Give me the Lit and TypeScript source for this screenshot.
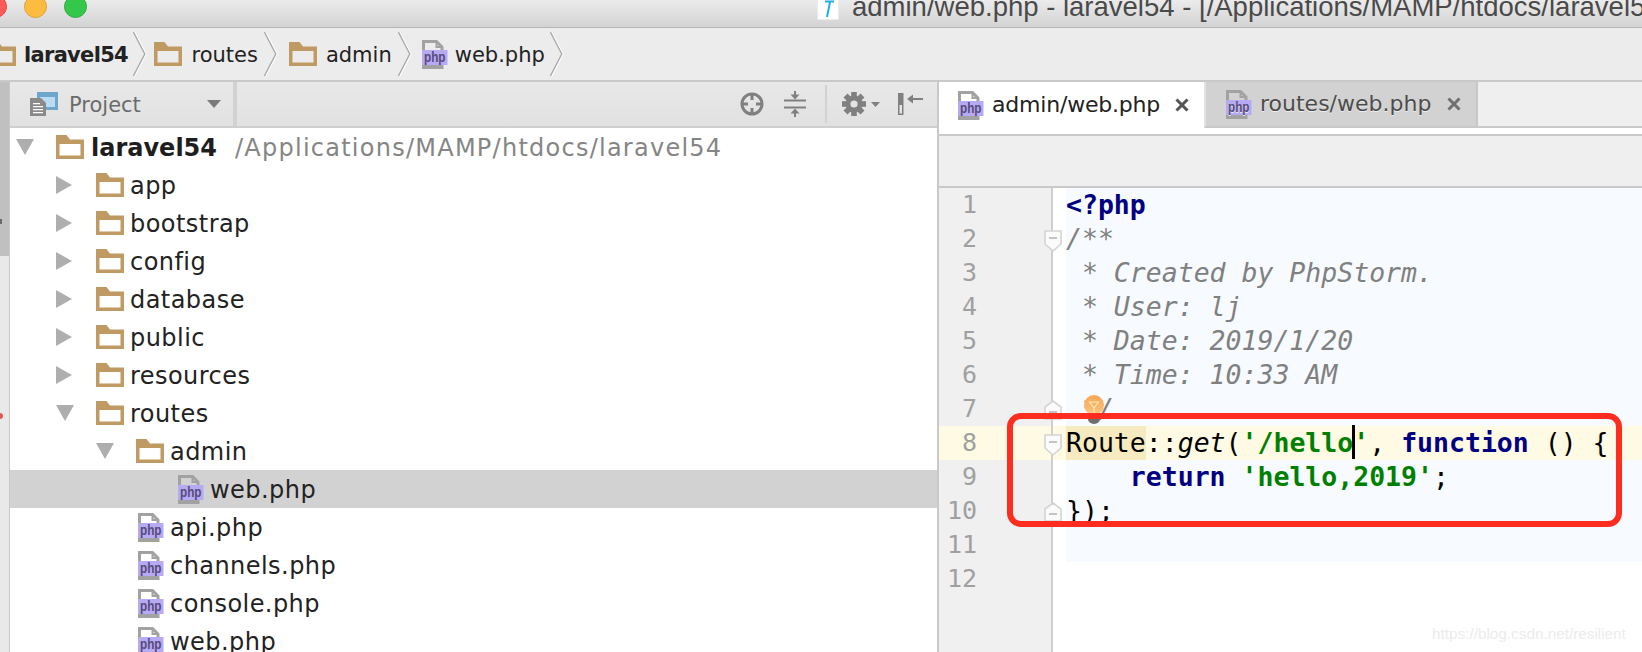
import { LitElement, html, css, svg } from "lit";
import { customElement } from "lit/decorators.js";

const folder = () => html`<svg class="folder" width="28" height="24" viewBox="0 0 28 24"><path fill="#c09a63" fill-rule="evenodd" d="M0 0h10.5l3.5 4.5H28V24H0zM3.5 9v11.5h21V9z"/></svg>`;
const phpIcon = () => html`<svg class="php" width="26" height="29" viewBox="0 0 26 29">
  <path fill="none" stroke="#a2a2a2" stroke-width="3" d="M1.5 11V1.5H14.5l5.5 5.5V11"/>
  <path fill="#a2a2a2" d="M13.5 1h2v5h5v2h-7z"/>
  <rect x="0" y="25" width="21.5" height="4" fill="#a2a2a2"/>
  <rect x="0" y="10" width="25.5" height="15" fill="#b8aaf2"/>
  <text x="2" y="21.5" textLength="21.5" lengthAdjust="spacingAndGlyphs" font-family="Liberation Sans" font-weight="700" font-size="15" fill="#544b7c">php</text>
</svg>`;
const chevron = () => html`<svg class="chev" width="14" height="46" viewBox="0 0 14 46"><polyline points="1.6,1 13,23 1.6,45" fill="none" stroke="#fff" stroke-width="1.4"/><polyline points="0.4,1 11.8,23 0.4,45" fill="none" stroke="#a9a9a9" stroke-width="1.4"/></svg>`;
const triOpen = () => html`<svg width="18" height="16" viewBox="0 0 18 16"><path fill="#aeaeae" d="M0 0h18L9 16z"/></svg>`;
const triClosed = () => html`<svg width="16" height="18" viewBox="0 0 16 18"><path fill="#aeaeae" d="M0 0l16 9L0 18z"/></svg>`;

const projectIcon = svg`<svg width="28" height="24" viewBox="0 0 28 24">
  <rect x="7" y="0" width="21" height="18" fill="#6ea5cc"/><rect x="10" y="5" width="15" height="10" fill="#b9dcf2"/>
  <path fill="#8a8a8a" d="M0 6h11l5 5v13H0z"/><path fill="#fff" d="M3 11h7v1.2H3zM3 14h10v1.2H3zM3 17h10v1.2H3zM3 20h10v1.2H3z"/>
</svg>`;
const targetIcon = svg`<svg width="24" height="24" viewBox="0 0 24 24" fill="none" stroke="#808080" stroke-width="3"><circle cx="12" cy="12" r="10"/><path d="M12 2v6M12 16v6M2 12h6M16 12h6"/></svg>`;
const collapseIcon = svg`<svg width="22" height="26" viewBox="0 0 22 26"><path stroke="#808080" stroke-width="2" d="M0 9.5h22M0 16.5h22M11 0v6M11 20v6"/><path fill="#808080" d="M6.5 3.5h9L11 8.5zM6.5 22.5h9L11 17.5z"/></svg>`;
const gearIcon = svg`<svg width="24" height="24" viewBox="0 0 24 24"><g fill="#808080">
  ${[0, 45, 90, 135].map((a) => svg`<rect x="9.2" y="0" width="5.6" height="24" transform="rotate(${a} 12 12)"/>`)}
  <circle cx="12" cy="12" r="8.6"/></g><circle cx="12" cy="12" r="3.6" fill="#e4e4e4"/></svg>`;
const smallTri = svg`<svg width="9" height="5" viewBox="0 0 9 5"><path fill="#808080" d="M0 0h9L4.5 5z"/></svg>`;
const hideIcon = svg`<svg width="25" height="22" viewBox="0 0 25 22"><path fill="#808080" d="M0 0h5.5v22H0z"/><rect x="1.5" y="12" width="2.5" height="8.5" fill="#e4e4e4"/><path fill="#808080" d="M9 6l6-4.5v3.4h10v2.2H15v3.4z"/></svg>`;
const hammerPage = svg`<svg width="22" height="21" viewBox="0 0 22 21"><rect width="22" height="21" rx="1" fill="#fff" stroke="#d8d8d8"/><path fill="none" stroke="#22aef0" stroke-width="2" d="M8 2.5h9M13 3l-3 15"/></svg>`;
const foldDown = svg`<svg width="18" height="22" viewBox="0 0 18 22"><path fill="#fbfbfb" stroke="#d4d4d4" stroke-width="1.6" d="M1 1h16v13l-8 7-8-7z"/><path stroke="#b8b8b8" stroke-width="1.6" d="M5 8h8"/></svg>`;
const foldUp = svg`<svg width="18" height="20" viewBox="0 0 18 20"><path fill="#fbfbfb" stroke="#d4d4d4" stroke-width="1.6" d="M1 19V7l8-6 8 6v12z"/><path stroke="#b8b8b8" stroke-width="1.6" d="M5 12h8"/></svg>`;
const bulb = svg`<svg width="22" height="30" viewBox="0 0 22 30">
  <defs><linearGradient id="bg" x1="0" y1="0" x2="0" y2="1"><stop offset="0" stop-color="#f8a654"/><stop offset="1" stop-color="#fbc37e"/></linearGradient></defs>
  <circle cx="11" cy="10" r="10" fill="url(#bg)"/><path fill="#fbc37e" d="M5 16h12l-2 4H7z"/>
  <path fill="none" stroke="#fdeab8" stroke-width="1.2" d="M6.5 7h9L11 13zM11 13v6"/>
  <path fill="#6e6e6e" d="M5 19h12v5a6 5 0 0 1-12 0z"/></svg>`;

const tree = [
  { l: 0, k: "open", n: "laravel54", root: true },
  { l: 1, k: "closed", n: "app" },
  { l: 1, k: "closed", n: "bootstrap" },
  { l: 1, k: "closed", n: "config" },
  { l: 1, k: "closed", n: "database" },
  { l: 1, k: "closed", n: "public" },
  { l: 1, k: "closed", n: "resources" },
  { l: 1, k: "open", n: "routes" },
  { l: 2, k: "open", n: "admin" },
  { l: 3, k: "file", n: "web.php", sel: true },
  { l: 2, k: "file", n: "api.php" },
  { l: 2, k: "file", n: "channels.php" },
  { l: 2, k: "file", n: "console.php" },
  { l: 2, k: "file", n: "web.php" },
];

const code = [
  html`<b class="kw">&lt;?php</b>`,
  html`<i class="cm">/**</i>`,
  html`<i class="cm"> * Created by PhpStorm.</i>`,
  html`<i class="cm"> * User: lj</i>`,
  html`<i class="cm"> * Date: 2019/1/20</i>`,
  html`<i class="cm"> * Time: 10:33 AM</i>`,
  html`<i class="cm"> */</i>`,
  html`<span class="ident">Route</span>::<i>get</i>(<b class="str">'/hello<span class="caret"></span>'</b>, <b class="kw">function</b> () {`,
  html`    <b class="kw">return</b> <b class="str">'hello,2019'</b>;`,
  html`});`,
  html``,
  html``,
];
const folds: Record<number, any> = { 2: foldDown, 7: foldUp, 8: foldDown, 10: foldUp };

@customElement("app-root")
export class AppRoot extends LitElement {
  static styles = css`
    :host { display: flex; flex-direction: column; position: relative; width: 1642px; height: 652px; overflow: hidden; background: #fff; font-family: "DejaVu Sans", sans-serif; color: #222; }
    svg { display: block; flex: none; }
    .titlebar { flex: none; height: 27px; border-bottom: 1px solid #b6b6b6; background: linear-gradient(#ebebeb, #d3d3d3); display: flex; align-items: flex-start; overflow: hidden; }
    .light { flex: none; width: 23px; height: 23px; border-radius: 50%; margin-top: -5px; box-sizing: border-box; border: 1px solid; }
    .light.r { margin-left: -16px; background: #fc5b57; border-color: #e2463f; }
    .light.y { margin-left: 17px; background: #fdbc40; border-color: #e1a02e; }
    .light.g { margin-left: 17px; background: #34c84a; border-color: #2dac3f; }
    .ticon { margin-left: 730px; margin-top: -1px; }
    .title { margin-left: 13px; margin-top: -7px; font: 27.5px/27px "Liberation Sans", sans-serif; color: #4a4a4a; white-space: nowrap; }

    .crumbs { flex: none; height: 52px; border-bottom: 2px solid #c9c9c9; background: #ececec; display: flex; align-items: center; font-size: 21px; overflow: hidden; white-space: nowrap; }
    .crumb { flex: none; display: flex; align-items: center; }
    .crumb span { margin-left: 9px; margin-right: 6px; position: relative; top: 1px; }
    .crumb.first { margin-left: -12px; margin-right: -3.5px; }
    .crumb.first span { font-weight: 700; margin-left: 8px; letter-spacing: -0.7px; margin-right: 5px; }
    .crumb + .crumb { margin-left: 11px; }
    .crumb.file { margin-left: 10px; }
    .crumb.file span { margin-left: 7px; margin-right: 5px; }

    .body { flex: 1; display: flex; min-height: 0; }
    .strip { flex: none; width: 9px; border-right: 1px solid #c8c8c8; background: #e9e9e9; position: relative; }
    .strip .thumb { height: 174px; background: #c0c0c0; }
    .mark-red { position: absolute; left: 0; top: 331px; width: 3px; height: 6px; background: #e0584e; border-radius: 0 3px 3px 0; }
    .mark-dark { position: absolute; left: 0; top: 137px; width: 2px; height: 5px; background: #6a6a6a; }

    .left { flex: none; width: 927px; display: flex; flex-direction: column; }
    .phead { flex: none; height: 44px; border-bottom: 2px solid #cfcfcf; background: linear-gradient(#e8e8e8, #e1e1e1); display: flex; align-items: center; }
    .pselect { flex: none; width: 227px; height: 100%; box-sizing: border-box; border-right: 4px solid #d2d2d2; display: flex; align-items: center; padding-left: 20px; padding-right: 12px; font-size: 21px; color: #6b6b6b; }
    .pselect span { margin-left: 11px; flex: 1; position: relative; top: 1px; }
    .ptri { width: 14px; height: 8px; background: #7a7a7a; clip-path: polygon(0 0, 100% 0, 50% 100%); }
    .tools { flex: 1; display: flex; align-items: center; justify-content: flex-end; padding-right: 14px; }
    .tools .sep { width: 2px; height: 38px; background: #d2d2d2; margin: 0 15px 0 19px; }
    .mc { margin-left: 20px; }
    .mt { margin-left: 5px; }
    .mh { margin-left: 18px; }

    .tree { flex: 1; font-size: 24px; overflow: hidden; }
    .row { height: 38px; display: flex; align-items: center; white-space: nowrap; color: #222; }
    .row.sel { background: #d2d2d2; }
    .tw { flex: none; width: 40px; display: flex; align-items: center; }
    .row .folder { flex: none; }
    .row .php { flex: none; margin-left: 2px; }
    .row .nm { margin-left: 6px; position: relative; top: 1px; letter-spacing: 0.45px; }
    .row .nm.root { font-weight: 700; color: #1e1e1e; letter-spacing: 0; margin-left: 7px; }
    .row .path { margin-left: 18px; color: #858585; position: relative; top: 1px; letter-spacing: 1.25px; }

    .vline { flex: none; width: 2px; background: #c9c9c9; }

    .right { flex: 1; min-width: 0; display: flex; flex-direction: column; }
    .tabs { flex: none; height: 52px; background: #fff; display: flex; align-items: flex-start; font-size: 22px; border-bottom: 2px solid #c9c9c9; }
    .tab { flex: none; display: flex; align-items: center; box-sizing: border-box; white-space: nowrap; }
    .tab.on { width: 265px; height: 52px; padding: 0 0 6px 19px; background: #fff; color: #222; }
    .tab.off { width: 274px; height: 46px; padding-left: 20px; background: #d2d2d2; color: #4c4c4c; border-left: 2px solid #e2e2e2; border-right: 2px solid #c8c8c8; border-bottom: 2px solid #c9c9c9; text-shadow: 0 1px 0 #eee; }
    .tab .lb { margin-left: 8px; position: relative; top: -1px; }
    .tab.on .lb { letter-spacing: -0.2px; }
    .x { margin-left: 16px; width: 14px; height: 14px; flex: none; }
    .tab.on .x { margin-left: 15px; }
    .tabfill { flex: 1; height: 46px; box-sizing: border-box; background: #efefef; border-bottom: 2px solid #c9c9c9; }
    .navbar { flex: none; height: 50px; background: #efefef; border-bottom: 2px solid #c9c9c9; }

    .editor { flex: 1; display: flex; flex-direction: column; min-height: 0; font-family: "DejaVu Sans Mono", monospace; font-size: 26.5px; color: #000; position: relative; background: #fff; }
    .ln { flex: none; height: 34px; display: flex; }
    .ln.fill { flex: 1; height: auto; }
    .num { flex: none; width: 114px; box-sizing: border-box; border-right: 2px solid #cfcfcf; background: #f0f0f0; color: #a0a0a0; text-align: right; padding-right: 74px; font-size: 25px; line-height: 34px; position: relative; }
    .foldg { flex: none; width: 13px; }
    .cd { flex: 1; white-space: pre; line-height: 33px; background: #f7faff; }
    .ln.plain .cd { background: #fff; }
    .ln.cur .num, .ln.cur .foldg, .ln.cur .cd { background: #fffae3; }
    .foldmark { position: absolute; left: 105px; top: 8px; line-height: 0; }
    .kw { color: #000080; font-weight: 700; }
    .str { color: #008000; font-weight: 700; }
    .cm { color: #808080; font-style: italic; }
    .ident { background: #f6ebc0; display: inline-block; height: 34px; }
    .caret { position: relative; }
    .caret::after { content: ""; position: absolute; left: -1px; top: -2px; width: 3px; height: 34px; background: #000; }
    .bulb { position: absolute; left: 144px; top: 207px; }
    .redbox { position: absolute; left: 1007px; top: 413px; width: 615px; height: 114px; box-sizing: border-box; border: 6px solid #ff2d20; border-radius: 14px; pointer-events: none; }
    .wm { position: absolute; left: 1432px; top: 624px; font: 15.3px/20px "Liberation Sans", sans-serif; color: #ececec; white-space: nowrap; }
  `;

  private x(c: string) {
    return html`<svg class="x" viewBox="0 0 14 14"><path stroke="${c}" stroke-width="3" d="M1.5 1.5l11 11M12.5 1.5l-11 11"/></svg>`;
  }

  render() {
    return html`
      <div class="titlebar">
        <div class="light r"></div><div class="light y"></div><div class="light g"></div>
        <div class="ticon">${hammerPage}</div>
        <div class="title">admin/web.php - laravel54 - [/Applications/MAMP/htdocs/laravel54]</div>
      </div>
      <div class="crumbs">
        <div class="crumb first">${folder()}<span>laravel54</span>${chevron()}</div>
        <div class="crumb">${folder()}<span>routes</span>${chevron()}</div>
        <div class="crumb">${folder()}<span>admin</span>${chevron()}</div>
        <div class="crumb file">${phpIcon()}<span>web.php</span>${chevron()}</div>
      </div>
      <div class="body">
        <div class="strip"><div class="thumb"></div><div class="mark-dark"></div><div class="mark-red"></div></div>
        <div class="left">
          <div class="phead">
            <div class="pselect">${projectIcon}<span>Project</span><div class="ptri"></div></div>
            <div class="tools">
              ${targetIcon}<div class="mc">${collapseIcon}</div><div class="sep"></div>${gearIcon}<div class="mt">${smallTri}</div><div class="mh">${hideIcon}</div>
            </div>
          </div>
          <div class="tree">
            ${tree.map((r) => html`
              <div class="row ${r.sel ? "sel" : ""}" style="padding-left:${6 + r.l * 40}px">
                <div class="tw">${r.k === "open" ? triOpen() : r.k === "closed" ? triClosed() : ""}</div>
                ${r.k === "file" ? phpIcon() : folder()}
                <span class="nm ${r.root ? "root" : ""}">${r.n}</span>
                ${r.root ? html`<span class="path">/Applications/MAMP/htdocs/laravel54</span>` : ""}
              </div>`)}
          </div>
        </div>
        <div class="vline"></div>
        <div class="right">
          <div class="tabs">
            <div class="tab on">${phpIcon()}<span class="lb">admin/web.php</span>${this.x("#555")}</div>
            <div class="tab off">${phpIcon()}<span class="lb">routes/web.php</span>${this.x("#707070")}</div>
            <div class="tabfill"></div>
          </div>
          <div class="navbar"></div>
          <div class="editor">
            ${code.map((c, i) => html`
              <div class="ln ${i === 7 ? "cur" : ""} ${i === 11 ? "plain" : ""}">
                <div class="num">${i + 1}${folds[i + 1] ? html`<div class="foldmark">${folds[i + 1]}</div>` : ""}</div>
                <div class="foldg"></div>
                <div class="cd">${c}</div>
              </div>`)}
            <div class="ln fill plain"><div class="num"></div><div class="foldg"></div><div class="cd"></div></div>
            <div class="bulb">${bulb}</div>
          </div>
        </div>
      </div>
      <div class="redbox"></div>
      <div class="wm">https://blog.csdn.net/resilient</div>
    `;
  }
}
